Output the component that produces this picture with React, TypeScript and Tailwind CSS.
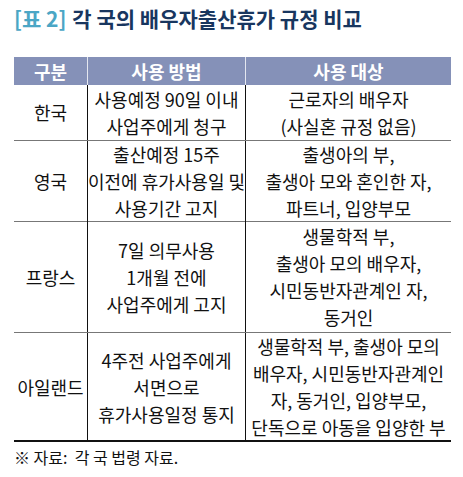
const rows = [
  {
    country: "한국",
    h: "h-[56px]",
    method: ["사용예정 90일 이내", "사업주에게 청구"],
    target: ["근로자의 배우자", "(사실혼 규정 없음)"],
  },
  {
    country: "영국",
    h: "h-[81px]",
    method: ["출산예정 15주", "이전에 휴가사용일 및", "사용기간 고지"],
    target: ["출생아의 부,", "출생아 모와 혼인한 자,", "파트너, 입양부모"],
  },
  {
    country: "프랑스",
    h: "h-[111px]",
    method: ["7일 의무사용", "1개월 전에", "사업주에게 고지"],
    target: ["생물학적 부,", "출생아 모의 배우자,", "시민동반자관계인 자,", "동거인"],
  },
  {
    country: "아일랜드",
    h: "h-[109px]",
    method: ["4주전 사업주에게", "서면으로", "휴가사용일정 통지"],
    target: ["생물학적 부, 출생아 모의", "배우자, 시민동반자관계인", "자, 동거인, 입양부모,", "단독으로 아동을 입양한 부"],
  },
]

const font = { fontFamily: '"Noto Sans CJK KR", "Noto Sans", sans-serif' }

function Lines({ lines }: { lines: string[] }) {
  return (
    <div className="flex flex-col items-center">
      {lines.map((l) => (
        <span key={l} className="whitespace-nowrap leading-[27px]">{l}</span>
      ))}
    </div>
  )
}

export default function App() {
  return (
    <div className="w-[463px] h-[477px] bg-white text-[#111]" style={font}>
      <div className="h-[37px] pl-[14px] flex items-center text-[21px] font-bold">
        <span className="text-[#4ba6c5]">[표 2]</span>
        <span className="ml-[6px] text-[#18365f]">각 국의 배우자출산휴가 규정 비교</span>
      </div>

      <div className="ml-[14px] mt-[20px] w-[437px]">
        <div className="grid grid-cols-[74px_158px_205px] h-[28px] bg-[#8591b8] text-white text-[18px] font-bold">
          <div className="flex items-center justify-center border-r-[1.5px] border-[#e4e7f0]">구분</div>
          <div className="flex items-center justify-center border-r-[1.5px] border-[#e4e7f0]">사용 방법</div>
          <div className="flex items-center justify-center">사용 대상</div>
        </div>

        {rows.map((r, i) => (
          <div
            key={r.country}
            className={`grid grid-cols-[74px_158px_205px] text-[18px] ${r.h} ${
              i === rows.length - 1 ? "border-b-[2px] border-[#111]" : "border-b border-[#777]"
            }`}
          >
            <div className="flex items-center justify-center border-r-[1.5px] border-[#111]">{r.country}</div>
            <div className="flex items-center justify-center border-r-[1.5px] border-[#111]">
              <Lines lines={r.method} />
            </div>
            <div className="flex items-center justify-center">
              <Lines lines={r.target} />
            </div>
          </div>
        ))}
      </div>

      <div className="pl-[14px] mt-[3px] text-[16px] leading-[24px] whitespace-pre">※ 자료:  각 국 법령 자료.</div>
    </div>
  )
}
